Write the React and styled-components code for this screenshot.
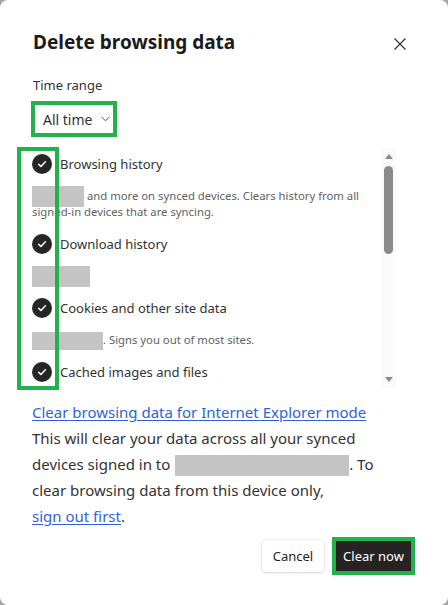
import React from "react";
import styled, { createGlobalStyle } from "styled-components";

const Global = createGlobalStyle`
  html, body { margin: 0; padding: 0; }
  body {
    background: #a3a3a3;
    font-family: "Noto Sans", "Open Sans", sans-serif;
    color: #333;
  }
`;

const MARK = "#22b14c";

const Dialog = styled.div`
  box-sizing: border-box;
  width: 448px;
  height: 605px;
  background: #fff;
  border-radius: 8px;
  padding: 28px 0 0 32px;
  display: flex;
  flex-direction: column;
`;

const Header = styled.div`
  display: flex;
  align-items: flex-start;
  justify-content: space-between;
  padding-right: 42px;
`;

const Title = styled.h1`
  margin: 0 0 0 1px;
  font-size: 19px;
  line-height: 28px;
  font-weight: 700;
  color: #1b1b1b;
`;

const CloseButton = styled.button`
  border: 0;
  background: none;
  padding: 0;
  margin-top: 10px;
  width: 12px;
  height: 12px;
  display: flex;
  color: #333;
`;

const FieldLabel = styled.div`
  margin: 19px 0 0 1px;
  font-size: 13px;
  line-height: 20px;
  color: #333;
`;

const SelectButton = styled.button`
  box-sizing: border-box;
  margin: 10px 0 0 3px;
  align-self: flex-start;
  height: 28px;
  width: 78px;
  padding: 0 0 0 8px;
  display: flex;
  align-items: center;
  gap: 9px;
  white-space: nowrap;
  border: 0;
  background: #fff;
  font-family: inherit;
  font-size: 14px;
  color: #333;
  outline: 4px solid ${MARK};
`;

const ListFrame = styled.div`
  position: relative;
  margin-top: 14px;
  height: 241px;
  display: flex;
  padding-right: 52px;
`;

const ListBody = styled.div`
  flex: 1;
  overflow: hidden;
  padding-top: 1px;
`;

const Item = styled.div`
  margin-bottom: 8px;
`;

const ItemRow = styled.div`
  display: flex;
  align-items: center;
  gap: 8px;
  height: 32px;
  font-size: 13px;
  color: #333;
`;

const Description = styled.div`
  margin-top: 8px;
  font-size: 11.3px;
  line-height: 16px;
  color: #616161;
  min-height: 16px;
  white-space: nowrap;
`;

const Redacted = styled.span`
  display: inline-block;
  vertical-align: middle;
  background: #c4c4c4;
  height: ${(p) => p.$h || 21}px;
  width: ${(p) => p.$w}px;
  margin: -4px 0 -4px ${(p) => p.$shift || 0}px;
`;

const ColumnMark = styled.div`
  position: absolute;
  left: -15px;
  top: 0;
  width: 42px;
  height: 243px;
  box-sizing: border-box;
  border: 4px solid ${MARK};
`;

const Track = styled.div`
  position: absolute;
  right: 52px;
  top: 1px;
  width: 15px;
  height: 240px;
  background: #fafafa;
  display: flex;
  flex-direction: column;
  align-items: center;
`;

const Arrow = styled.div`
  width: 0;
  height: 0;
  border-left: 4px solid transparent;
  border-right: 4px solid transparent;
  ${(p) =>
    p.$down
      ? `border-top: 5px solid #8a8a8a; margin-top: auto; margin-bottom: 6px;`
      : `border-bottom: 5px solid #8a8a8a; margin-top: 6px;`}
`;

const Thumb = styled.div`
  margin-top: 7px;
  width: 9px;
  height: 88px;
  border-radius: 5px;
  background: #8a8a8a;
`;

const LinkLine = styled.a`
  margin-top: 11px;
  align-self: flex-start;
  font-size: 15px;
  line-height: 26px;
  color: #2f63d4;
  text-decoration: underline;
  text-underline-offset: 2px;
`;

const Paragraph = styled.p`
  margin: 0;
  font-size: 15px;
  line-height: 26px;
  color: #333;
`;

const InlineLink = styled.a`
  color: #2f63d4;
  text-decoration: underline;
  text-underline-offset: 2px;
`;

const Footer = styled.div`
  margin-top: 11px;
  display: flex;
  justify-content: flex-end;
  gap: 11px;
  padding-right: 36px;
`;

const Button = styled.button`
  box-sizing: border-box;
  height: 32px;
  width: ${(p) => (p.$primary ? 77 : 62)}px;
  padding: 0;
  border-radius: 4px;
  border: 0;
  font-family: inherit;
  font-size: 13px;
  white-space: nowrap;
  background: ${(p) => (p.$primary ? "#262322" : "#fff")};
  color: ${(p) => (p.$primary ? "#fff" : "#242424")};
  box-shadow: ${(p) =>
    p.$primary ? "none" : "0 0 2px rgba(0,0,0,0.12), 0 1px 3px rgba(0,0,0,0.14)"};
  ${(p) => p.$primary && `outline: 4px solid ${MARK}; outline-offset: -1px; border-radius: 0;`}
`;

const CheckIcon = () => (
  <svg width="20" height="20" viewBox="0 0 20 20" style={{ flexShrink: 0 }}>
    <circle cx="10" cy="10" r="10" fill="#262626" />
    <path d="M6.6 10.3 L8.9 12.5 L13.4 7.8" fill="none" stroke="#fff" strokeWidth="1.5" strokeLinecap="round" strokeLinejoin="round" />
  </svg>
);

const CloseIcon = () => (
  <svg width="12" height="12" viewBox="0 0 12 12">
    <path d="M0.5 0.5 L11.5 11.5 M11.5 0.5 L0.5 11.5" stroke="currentColor" strokeWidth="1.2" />
  </svg>
);

const Chevron = () => (
  <svg width="9" height="6" viewBox="0 0 9 6">
    <path d="M0.5 0.8 L4.5 4.8 L8.5 0.8" fill="none" stroke="#555" strokeWidth="1" />
  </svg>
);

const items = [
  {
    label: "Browsing history",
    desc: (
      <>
        <Redacted $w={57} $shift={-5} /> and more on synced devices. Clears history from all
        <br />
        signed-in devices that are syncing.
      </>
    ),
  },
  { label: "Download history", desc: <Redacted $w={68} $shift={-10} /> },
  {
    label: "Cookies and other site data",
    desc: (
      <>
        <Redacted $w={76} $h={18} $shift={-5} />. Signs you out of most sites.
      </>
    ),
  },
  { label: "Cached images and files" },
];

export default function App() {
  return (
    <>
      <Global />
      <Dialog>
        <Header>
          <Title>Delete browsing data</Title>
          <CloseButton aria-label="Close">
            <CloseIcon />
          </CloseButton>
        </Header>
        <FieldLabel>Time range</FieldLabel>
        <SelectButton>
          All time <Chevron />
        </SelectButton>
        <ListFrame>
          <ListBody>
            {items.map((it) => (
              <Item key={it.label}>
                <ItemRow>
                  <CheckIcon />
                  {it.label}
                </ItemRow>
                {it.desc && <Description>{it.desc}</Description>}
              </Item>
            ))}
          </ListBody>
          <Track>
            <Arrow />
            <Thumb />
            <Arrow $down />
          </Track>
          <ColumnMark />
        </ListFrame>
        <LinkLine href="#">Clear browsing data for Internet Explorer mode</LinkLine>
        <Paragraph>
          This will clear your data across all your synced
          <br />
          devices signed in to <Redacted $w={174} $shift={1} />. To
          <br />
          clear browsing data from this device only,
          <br />
          <InlineLink href="#">sign out first</InlineLink>.
        </Paragraph>
        <Footer>
          <Button>Cancel</Button>
          <Button $primary>Clear now</Button>
        </Footer>
      </Dialog>
    </>
  );
}
